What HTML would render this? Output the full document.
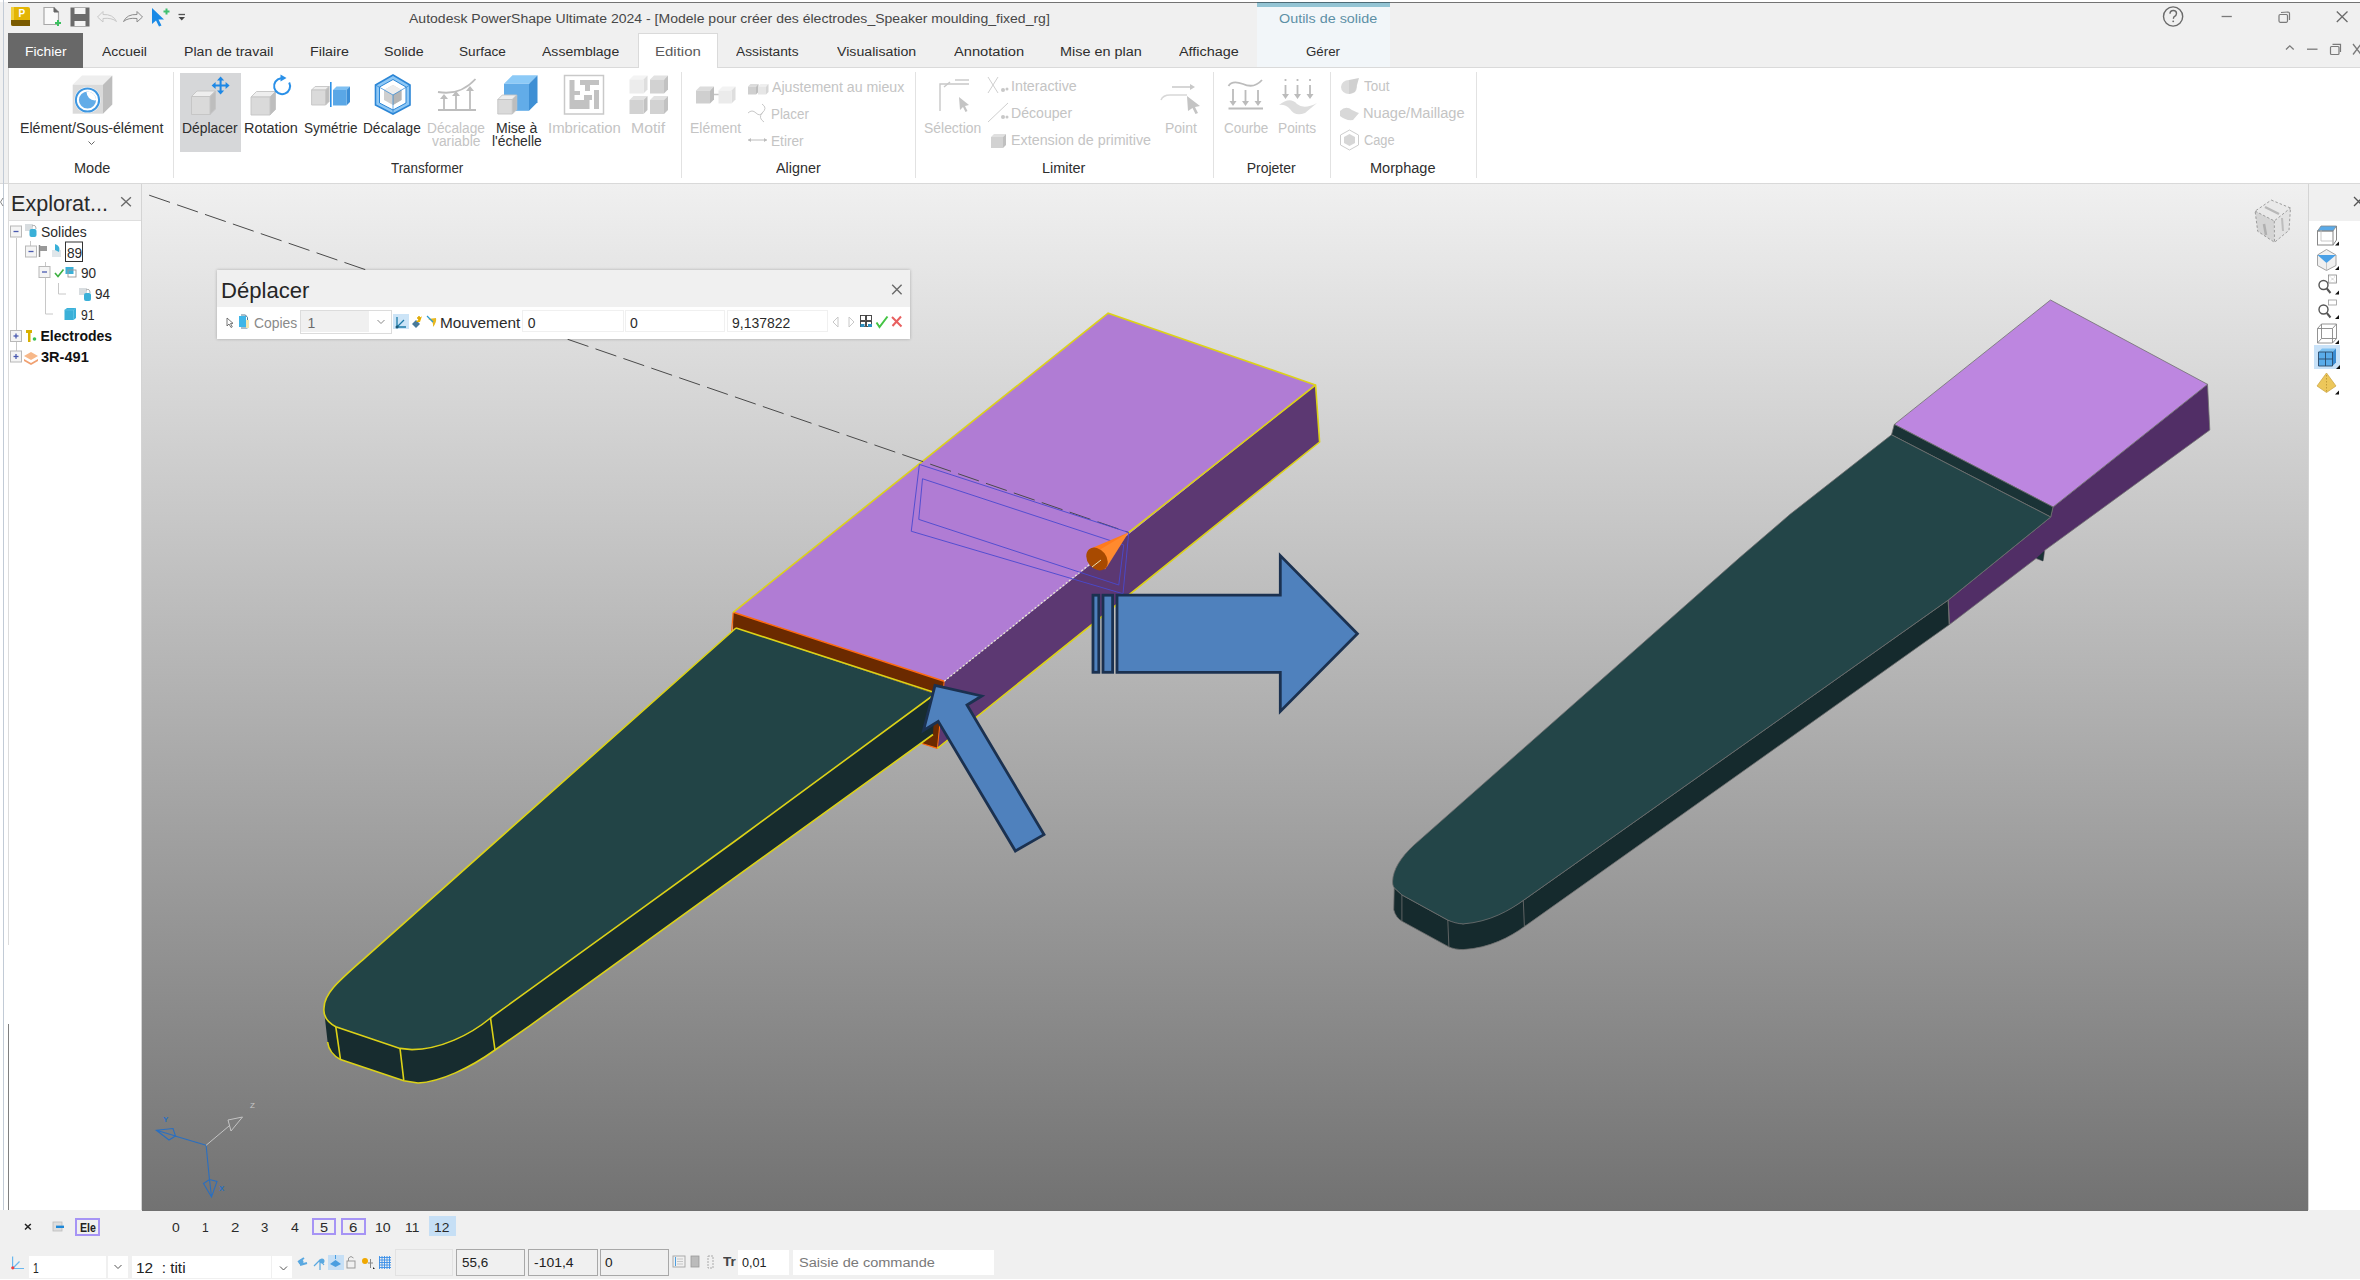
<!DOCTYPE html>
<html><head><meta charset="utf-8">
<style>
html,body{margin:0;padding:0;width:2360px;height:1280px;overflow:hidden;background:#f0f0f0;}
body{position:relative;font-family:"Liberation Sans",sans-serif;}
div{position:absolute;box-sizing:border-box;}
.t{position:absolute;white-space:pre;transform-origin:0 0;}
svg{position:absolute;left:0;top:0;}
</style></head><body>
<div style="left:0px;top:0px;width:2360px;height:2px;background:#ffffff"></div>
<div style="left:8px;top:2px;width:2352px;height:1px;background:#737373"></div>
<div style="left:0px;top:3px;width:2360px;height:30px;background:#f0f0f0"></div>
<div style="left:1257px;top:2px;width:133px;height:66px;background:#f2f6f9"></div>
<div style="left:1257px;top:2px;width:133px;height:1px;background:#4d6b76"></div>
<div style="left:1257px;top:3px;width:133px;height:4px;background:#93c4d4"></div>
<div style="left:8px;top:67px;width:2352px;height:1px;background:#dadada"></div>
<div style="left:8px;top:33px;width:75px;height:35px;background:#686868"></div>
<div style="left:638px;top:33px;width:80px;height:36px;background:#ffffff;border:1px solid #dadada;border-bottom:none"></div>
<div style="left:8px;top:68px;width:2352px;height:115px;background:#ffffff"></div>
<div style="left:8px;top:68px;width:1px;height:115px;background:#dadada"></div>
<div style="left:0px;top:183px;width:2360px;height:1px;background:#d9d9d9"></div>
<div style="left:173px;top:72px;width:1px;height:106px;background:#e2e2e2"></div>
<div style="left:681px;top:72px;width:1px;height:106px;background:#e2e2e2"></div>
<div style="left:915px;top:72px;width:1px;height:106px;background:#e2e2e2"></div>
<div style="left:1213px;top:72px;width:1px;height:106px;background:#e2e2e2"></div>
<div style="left:1330px;top:72px;width:1px;height:106px;background:#e2e2e2"></div>
<div style="left:1476px;top:72px;width:1px;height:106px;background:#e2e2e2"></div>
<div style="left:0px;top:184px;width:8px;height:1096px;background:#ffffff"></div>
<div style="left:3px;top:0px;width:1px;height:1280px;background:#c2cbd6"></div>
<div style="left:8px;top:184px;width:134px;height:37px;background:#f0f0f0"></div>
<div style="left:8px;top:221px;width:134px;height:989px;background:#ffffff"></div>
<div style="left:141px;top:184px;width:1px;height:1026px;background:#d4d4d4"></div>
<div style="left:8px;top:220px;width:133px;height:1px;background:#dedede"></div>
<div style="left:2309px;top:220px;width:51px;height:1px;background:#dedede"></div>
<div style="left:8px;top:184px;width:1px;height:761px;background:#dcdcdc"></div>
<div style="left:8px;top:1024px;width:1px;height:256px;background:#808080"></div>
<div style="left:4px;top:184px;width:4px;height:1096px;background:#ffffff"></div>
<div style="left:142px;top:184px;width:2166px;height:1027px;background:linear-gradient(to bottom,#f0f0f0 0%,#727272 100%)"></div>
<div style="left:2308px;top:184px;width:52px;height:37px;background:#f0f0f0"></div>
<div style="left:2308px;top:221px;width:52px;height:989px;background:#ffffff"></div>
<div style="left:2308px;top:184px;width:1px;height:1026px;background:#d4d4d4"></div>
<div style="left:0px;top:1210px;width:2360px;height:70px;background:#f0f0f0"></div>
<div style="left:142px;top:1210px;width:2166px;height:1px;background:#707070"></div>
<div style="left:0px;top:1279px;width:2360px;height:1px;background:#ffffff"></div>
<div style="left:180px;top:72.6px;width:61.4px;height:79.4px;background:#d6d7d9"></div>
<div style="left:75.3px;top:1217.5px;width:24.7px;height:18.5px;border:2px solid #a694f5;background:#f0f0f0"></div>
<div style="left:311.8px;top:1217.9px;width:24px;height:17.5px;border:2px solid #a694f5;background:#f0f0f0"></div>
<div style="left:341.2px;top:1217.9px;width:24.4px;height:17.5px;border:2px solid #a694f5;background:#f0f0f0"></div>
<div style="left:428.6px;top:1216px;width:27.2px;height:20px;background:#c6dff5"></div>
<div style="left:28.8px;top:1255.8px;width:77.2px;height:22px;background:#ffffff"></div>
<div style="left:107.8px;top:1255.8px;width:20.3px;height:22px;background:#ffffff"></div>
<div style="left:131.9px;top:1256px;width:139.5px;height:22px;background:#ffffff"></div>
<div style="left:272px;top:1256px;width:20.4px;height:22px;background:#ffffff"></div>
<div style="left:328px;top:1254.5px;width:15.5px;height:15.5px;background:#c6dff5"></div>
<div style="left:394.7px;top:1249px;width:58.3px;height:26.5px;background:#f0f0f0;border:1px solid #e2e2e2"></div>
<div style="left:456.3px;top:1248.6px;width:69px;height:27.5px;background:#f0f0f0;border:1px solid #a8a8a8"></div>
<div style="left:527.6px;top:1248.6px;width:70px;height:27.5px;background:#f0f0f0;border:1px solid #a8a8a8"></div>
<div style="left:600.3px;top:1248.6px;width:68.8px;height:27.5px;background:#f0f0f0;border:1px solid #a8a8a8"></div>
<div style="left:737.9px;top:1250px;width:51.3px;height:25px;background:#ffffff"></div>
<div style="left:792.7px;top:1250px;width:201.6px;height:25px;background:#ffffff"></div>
<div style="left:2314px;top:345px;width:26px;height:24px;background:#c9e2f8"></div>
<svg width="2360" height="1280" viewBox="0 0 2360 1280">
<clipPath id="vpclip"><rect x="142" y="184" width="2166" height="1026"/></clipPath>
<g clip-path="url(#vpclip)">
<path d="M1315.6,385 L1319.6,442 L937.4,748.4 L944.2,681.3 Z" fill="#5c3872"/>
<path d="M1108.1,313.2 L1315.6,385 L944.2,681.3 L733.2,612.3 Z" fill="#b07cd4"/>
<path d="M733.2,612.3 L944.2,681.3 L935,694 L736,628 L733,634 Z" fill="#6b2a00"/>
<path d="M933,692 L944.2,681.3 L937.4,748.4 L921.8,743.5 L933,734 Z" fill="#6b2a00"/>
<path d="M733.2,612.3 L944.2,681.3" stroke="#ff6a10" stroke-width="1.6" fill="none"/>
<path d="M733.2,612.3 L731.5,633" stroke="#ff6a10" stroke-width="1.2" fill="none"/>
<path d="M937.4,748.4 L921.8,743.5" stroke="#ff6a10" stroke-width="1.2" fill="none"/>
<path d="M937.4,748.4 L944.2,681.3" stroke="#ff6a10" stroke-width="1" fill="none"/>
<path d="M935,694 L933,734.5 L530,1025.6 L495,1050 C470,1068 440,1082 418,1083 L403.8,1080.7 L340.5,1059.6 C332,1055 328.5,1049 327.6,1042 L324,1010 C323,1016 327,1022 335.8,1026.8 L400,1048.4 L412,1049.6 C440,1049.5 470,1035 490.5,1018 L530,989.4 Z" fill="#172c2f"/>
<path d="M736,628 L935,694 L736.5,840 L640,909.8 L530,989.4 L490.5,1018 C470,1035 440,1049.5 412,1049.6 L400,1048.4 L335.8,1026.8 C327,1022 323,1016 324,1008 C324,993 340,980 365,957.8 Z" fill="#224446"/>
<g fill="none" stroke="#dcd218" stroke-width="1.6"><path d="M733.2,612.3 L1108.1,313.2 L1315.6,385 L1319.6,442 L937.4,748.4"/><path d="M1315.6,385 L1128.75,532.5"/><path d="M736,628 L365,957.8 C340,980 324,993 324,1008 C323,1016 327,1022 335.8,1026.8 L400,1048.4 L412,1049.6 C440,1049.5 470,1035 490.5,1018 L530,989.4 L640,909.8 L736.5,840 L935,694"/><path d="M736,628 L933,692"/><path d="M933,734.5 L530,1025.6 L495,1050 C470,1068 440,1082 418,1083 L403.8,1080.7 L340.5,1059.6 C332,1055 328.5,1049 327.6,1042"/><path d="M335.8,1026.8 L340.5,1059.6 M400,1048.4 L403.8,1080.7 M490.5,1018 L495,1050"/></g>
<line x1="149.2" y1="195.2" x2="1128.75" y2="532.5" stroke="#4a4a4a" stroke-width="1" stroke-dasharray="22 7.5"/>
<path d="M944.2,681.3 L1100,556" stroke="#e8e8d0" stroke-width="1.3" stroke-dasharray="2 2" fill="none"/>
<g fill="none" stroke="#4a4ad0" stroke-width="1" opacity="0.9"><path d="M919.4,464.4 L1128.75,532.5 L1123,593.75 L911.25,531.25 Z"/><path d="M922.5,478.75 L1123.75,545 L1118.75,585 L918.75,519.4 Z"/></g>
<path d="M1128.5,532.5 L1088.5,549.5 L1105,569.5 Z" fill="#ff7b1c"/>
<path d="M1128.5,532.5 L1096,552 L1107,567 Z" fill="#ff9a40" opacity="0.5"/>
<ellipse cx="1097" cy="559" rx="9.5" ry="12.5" transform="rotate(-38 1097 559)" fill="#a84a00"/>
<path d="M1092,567 L1101,560" stroke="#e8e0b0" stroke-width="1"/>
<path d="M2207.5,384.3 L2053,507 L2050.7,517 L1948.2,600.1 L1949.3,624.7 L2036,558.5 L2043,561 L2044.8,550.3 L2209.8,430 Z" fill="#512e66" stroke="#707070" stroke-width="0.8"/>
<path d="M2036.6,558 L2044.2,551 L2043,561 Z" fill="#1a3336"/>
<path d="M2050.5,300 L2207.5,384.3 L2053,507 L1894.3,424.4 Z" fill="#bd86e0" stroke="#707070" stroke-width="0.8"/>
<path d="M1894.3,424.4 L2053,507 L2050.7,517 L1891.5,434.8 Z" fill="#1a3336" stroke="#707070" stroke-width="0.8"/>
<path d="M1948.2,600.1 L1523.3,900.4 C1510,910 1490,919 1463.1,923.9 L1447.8,920.1 L1401.9,894.9 L1394.2,887.8 L1393.7,909.7 C1395,915 1398,919 1401.9,921.2 L1448.9,946.9 C1452,948.5 1458,949.6 1463.1,949.6 C1490,948 1510,937 1524.4,926.6 L1949.3,624.7 Z" fill="#152a2d" stroke="#707070" stroke-width="0.8"/>
<path d="M1891.5,434.8 L1790.3,514.1 L1740,557.3 L1414,845 C1400,858 1393,870 1392.6,881.2 C1392.5,884 1393,886 1394.2,887.8 L1401.9,894.9 L1447.8,920.1 C1452,922 1458,923.9 1463.1,923.9 C1490,922 1510,910 1523.3,900.4 L1948.2,600.1 L2050.7,517 Z" fill="#234548" stroke="#707070" stroke-width="0.8"/>
<path d="M1401.9,894.9 L1401.9,921.2 M1447.8,920.1 L1448.9,946.9 M1523.3,900.4 L1524.4,926.6 M1948.2,600.1 L1949.3,624.7" stroke="#707070" stroke-width="0.8" fill="none"/>
<path d="M935,685.3 L981.7,696 L967,705 L1044,834.6 L1015.4,851 L938.2,721.4 L923.5,730.4 Z" fill="#4f81bd" stroke="#1b3150" stroke-width="2.8" stroke-linejoin="miter"/>
<g fill="#4f81bd" stroke="#1b3150" stroke-width="2.8"><rect x="1093" y="595.2" width="5.8" height="77.1"/><rect x="1103" y="595.2" width="9.6" height="77.1"/><path d="M1117,595.2 L1280.3,595.2 L1280.3,555.6 L1357.4,633.8 L1280.3,711.4 L1280.3,672.3 L1117,672.3 Z"/></g>
</g>
</svg>
<div style="left:217px;top:270px;width:693px;height:69px;box-shadow:0 0 3px 0px rgba(0,0,0,0.25)"></div>
<div style="left:217px;top:270px;width:693px;height:37px;background:#f0f0f0"></div>
<div style="left:217px;top:307px;width:693px;height:32px;background:#ffffff"></div>
<div style="left:299.5px;top:309.6px;width:92.1px;height:24.1px;background:#fff;border:1px solid #dcdcdc"></div>
<div style="left:301px;top:311px;width:67.5px;height:21px;background:#f0f0f0"></div>
<div style="left:522px;top:310px;width:101.5px;height:22px;background:#fff;border:1px solid #f0f0f0"></div>
<div style="left:625px;top:310px;width:100px;height:22px;background:#fff;border:1px solid #f0f0f0"></div>
<div style="left:726.9px;top:310px;width:100.9px;height:22px;background:#fff;border:1px solid #f0f0f0"></div>
<div style="left:393px;top:314px;width:16px;height:15px;background:#cce4f7"></div>
<span class="t" style="left:408.50px;top:11.00px;font-size:13.7px;line-height:15.30px;color:#474747;transform:scaleX(1.0246);">Autodesk PowerShape Ultimate 2024 - [Modele pour créer des électrodes_Speaker moulding_fixed_rg]</span>
<span class="t" style="left:1279.00px;top:11.00px;font-size:13.7px;line-height:15.30px;color:#5d90a6;transform:scaleX(1.0487);">Outils de solide</span>
<span class="t" style="left:24.89px;top:44.20px;font-size:13.7px;line-height:15.30px;color:#ffffff;transform:scaleX(1.0121);">Fichier</span>
<span class="t" style="left:102.10px;top:44.20px;font-size:13.7px;line-height:15.30px;color:#2e2e2e;transform:scaleX(1.0185);">Accueil</span>
<span class="t" style="left:184.37px;top:44.20px;font-size:13.7px;line-height:15.30px;color:#2e2e2e;transform:scaleX(1.0304);">Plan de travail</span>
<span class="t" style="left:310.36px;top:44.20px;font-size:13.7px;line-height:15.30px;color:#2e2e2e;transform:scaleX(1.0434);">Filaire</span>
<span class="t" style="left:384.20px;top:44.20px;font-size:13.7px;line-height:15.30px;color:#2e2e2e;transform:scaleX(1.0418);">Solide</span>
<span class="t" style="left:458.60px;top:44.20px;font-size:13.7px;line-height:15.30px;color:#2e2e2e;transform:scaleX(0.9944);">Surface</span>
<span class="t" style="left:541.70px;top:44.20px;font-size:13.7px;line-height:15.30px;color:#2e2e2e;transform:scaleX(1.0253);">Assemblage</span>
<span class="t" style="left:736.30px;top:44.20px;font-size:13.7px;line-height:15.30px;color:#2e2e2e;transform:scaleX(1.0027);">Assistants</span>
<span class="t" style="left:836.70px;top:44.20px;font-size:13.7px;line-height:15.30px;color:#2e2e2e;transform:scaleX(1.0344);">Visualisation</span>
<span class="t" style="left:953.90px;top:44.20px;font-size:13.7px;line-height:15.30px;color:#2e2e2e;transform:scaleX(1.0719);">Annotation</span>
<span class="t" style="left:1060.25px;top:44.20px;font-size:13.7px;line-height:15.30px;color:#2e2e2e;transform:scaleX(1.0540);">Mise en plan</span>
<span class="t" style="left:1179.20px;top:44.20px;font-size:13.7px;line-height:15.30px;color:#2e2e2e;transform:scaleX(1.0532);">Affichage</span>
<span class="t" style="left:1306.00px;top:44.20px;font-size:13.7px;line-height:15.30px;color:#2e2e2e;transform:scaleX(0.9709);">Gérer</span>
<span class="t" style="left:654.50px;top:44.20px;font-size:13.7px;line-height:15.30px;color:#5a5a5a;transform:scaleX(1.0960);">Edition</span>
<span class="t" style="left:20.49px;top:121.23px;font-size:14px;line-height:15.64px;color:#2e2e2e;transform:scaleX(1.0125);">Elément/Sous-élément</span>
<span class="t" style="left:182.01px;top:121.23px;font-size:14px;line-height:15.64px;color:#2e2e2e;transform:scaleX(0.9934);">Déplacer</span>
<span class="t" style="left:243.97px;top:121.23px;font-size:14px;line-height:15.64px;color:#2e2e2e;transform:scaleX(1.0326);">Rotation</span>
<span class="t" style="left:303.90px;top:121.23px;font-size:14px;line-height:15.64px;color:#2e2e2e;transform:scaleX(0.9685);">Symétrie</span>
<span class="t" style="left:363.02px;top:121.23px;font-size:14px;line-height:15.64px;color:#2e2e2e;transform:scaleX(0.9766);">Décalage</span>
<span class="t" style="left:427.02px;top:121.23px;font-size:14px;line-height:15.64px;color:#c4c4c4;transform:scaleX(0.9800);">Décalage</span>
<span class="t" style="left:432.00px;top:134.33px;font-size:14px;line-height:15.64px;color:#c4c4c4;transform:scaleX(0.9870);">variable</span>
<span class="t" style="left:495.70px;top:121.23px;font-size:14px;line-height:15.64px;color:#2e2e2e;transform:scaleX(1.0038);">Mise à</span>
<span class="t" style="left:492.00px;top:134.33px;font-size:14px;line-height:15.64px;color:#2e2e2e;transform:scaleX(0.9908);">l'échelle</span>
<span class="t" style="left:547.64px;top:121.23px;font-size:14px;line-height:15.64px;color:#c4c4c4;transform:scaleX(1.0647);">Imbrication</span>
<span class="t" style="left:631.07px;top:121.23px;font-size:14px;line-height:15.64px;color:#c4c4c4;transform:scaleX(1.1274);">Motif</span>
<span class="t" style="left:689.70px;top:121.23px;font-size:14px;line-height:15.64px;color:#c4c4c4;transform:scaleX(0.9967);">Elément</span>
<span class="t" style="left:772.00px;top:80.13px;font-size:14px;line-height:15.64px;color:#c4c4c4;transform:scaleX(1.0120);">Ajustement au mieux</span>
<span class="t" style="left:771.05px;top:106.53px;font-size:14px;line-height:15.64px;color:#c4c4c4;transform:scaleX(0.9533);">Placer</span>
<span class="t" style="left:771.02px;top:134.03px;font-size:14px;line-height:15.64px;color:#c4c4c4;transform:scaleX(0.9760);">Etirer</span>
<span class="t" style="left:924.20px;top:121.13px;font-size:14px;line-height:15.64px;color:#c4c4c4;transform:scaleX(0.9946);">Sélection</span>
<span class="t" style="left:1010.78px;top:79.43px;font-size:14px;line-height:15.64px;color:#c4c4c4;transform:scaleX(1.0188);">Interactive</span>
<span class="t" style="left:1010.79px;top:106.13px;font-size:14px;line-height:15.64px;color:#c4c4c4;transform:scaleX(1.0060);">Découper</span>
<span class="t" style="left:1010.78px;top:133.13px;font-size:14px;line-height:15.64px;color:#c4c4c4;transform:scaleX(1.0223);">Extension de primitive</span>
<span class="t" style="left:1164.50px;top:121.13px;font-size:14px;line-height:15.64px;color:#c4c4c4;transform:scaleX(0.9961);">Point</span>
<span class="t" style="left:1223.60px;top:121.03px;font-size:14px;line-height:15.64px;color:#c4c4c4;transform:scaleX(0.9646);">Courbe</span>
<span class="t" style="left:1277.82px;top:121.03px;font-size:14px;line-height:15.64px;color:#c4c4c4;transform:scaleX(0.9813);">Points</span>
<span class="t" style="left:1364.20px;top:79.23px;font-size:14px;line-height:15.64px;color:#c4c4c4;transform:scaleX(0.9596);">Tout</span>
<span class="t" style="left:1363.16px;top:105.93px;font-size:14px;line-height:15.64px;color:#c4c4c4;transform:scaleX(1.0446);">Nuage/Maillage</span>
<span class="t" style="left:1364.20px;top:133.13px;font-size:14px;line-height:15.64px;color:#c4c4c4;transform:scaleX(0.9144);">Cage</span>
<span class="t" style="left:73.96px;top:160.63px;font-size:14px;line-height:15.64px;color:#2e2e2e;transform:scaleX(1.0370);">Mode</span>
<span class="t" style="left:391.40px;top:160.63px;font-size:14px;line-height:15.64px;color:#2e2e2e;transform:scaleX(0.9546);">Transformer</span>
<span class="t" style="left:776.00px;top:160.63px;font-size:14px;line-height:15.64px;color:#2e2e2e;transform:scaleX(1.0247);">Aligner</span>
<span class="t" style="left:1042.27px;top:160.63px;font-size:14px;line-height:15.64px;color:#2e2e2e;transform:scaleX(1.0328);">Limiter</span>
<span class="t" style="left:1246.70px;top:160.63px;font-size:14px;line-height:15.64px;color:#2e2e2e;">Projeter</span>
<span class="t" style="left:1369.66px;top:160.63px;font-size:14px;line-height:15.64px;color:#2e2e2e;transform:scaleX(1.0393);">Morphage</span>
<span class="t" style="left:11.34px;top:191.24px;font-size:22.5px;line-height:25.13px;color:#2a2a2a;transform:scaleX(0.9582);">Explorat...</span>
<span class="t" style="left:40.50px;top:224.93px;font-size:14px;line-height:15.64px;color:#2a2a2a;transform:scaleX(0.9953);">Solides</span>
<span class="t" style="left:66.60px;top:245.53px;font-size:14px;line-height:15.64px;color:#2a2a2a;transform:scaleX(0.9755);">89</span>
<span class="t" style="left:80.70px;top:266.13px;font-size:14px;line-height:15.64px;color:#2a2a2a;transform:scaleX(0.9692);">90</span>
<span class="t" style="left:94.80px;top:287.33px;font-size:14px;line-height:15.64px;color:#2a2a2a;transform:scaleX(0.9629);">94</span>
<span class="t" style="left:80.70px;top:307.93px;font-size:14px;line-height:15.64px;color:#2a2a2a;transform:scaleX(0.8742);">91</span>
<span class="t" style="left:40.50px;top:329.13px;font-size:14px;line-height:15.64px;color:#111111;font-weight:bold;">Electrodes</span>
<span class="t" style="left:40.50px;top:349.73px;font-size:14px;line-height:15.64px;color:#111111;font-weight:bold;transform:scaleX(1.0405);">3R-491</span>
<span class="t" style="left:220.70px;top:279.49px;font-size:22px;line-height:24.57px;color:#262626;transform:scaleX(1.0033);">Déplacer</span>
<span class="t" style="left:253.70px;top:315.73px;font-size:14px;line-height:15.64px;color:#8a8a8a;transform:scaleX(0.9936);">Copies</span>
<span class="t" style="left:307.60px;top:315.73px;font-size:14px;line-height:15.64px;color:#6a6a6a;">1</span>
<span class="t" style="left:439.60px;top:315.73px;font-size:14px;line-height:15.64px;color:#2b2b2b;transform:scaleX(1.0975);">Mouvement</span>
<span class="t" style="left:527.70px;top:315.73px;font-size:14px;line-height:15.64px;color:#2b2b2b;">0</span>
<span class="t" style="left:630.00px;top:315.73px;font-size:14px;line-height:15.64px;color:#2b2b2b;">0</span>
<span class="t" style="left:732.10px;top:315.73px;font-size:14px;line-height:15.64px;color:#2b2b2b;transform:scaleX(0.9965);">9,137822</span>
<span class="t" style="left:79.70px;top:1220.40px;font-size:13.7px;line-height:15.30px;color:#222222;font-weight:bold;transform:scaleX(0.7739);">Ele</span>
<span class="t" style="left:172.40px;top:1220.65px;font-size:13.2px;line-height:14.74px;color:#2a2a2a;transform:scaleX(1.0571);">0</span>
<span class="t" style="left:202.08px;top:1220.65px;font-size:13.2px;line-height:14.74px;color:#2a2a2a;transform:scaleX(0.9167);">1</span>
<span class="t" style="left:231.00px;top:1220.65px;font-size:13.2px;line-height:14.74px;color:#2a2a2a;transform:scaleX(1.1429);">2</span>
<span class="t" style="left:261.00px;top:1220.65px;font-size:13.2px;line-height:14.74px;color:#2a2a2a;">3</span>
<span class="t" style="left:290.50px;top:1220.65px;font-size:13.2px;line-height:14.74px;color:#2a2a2a;transform:scaleX(1.0714);">4</span>
<span class="t" style="left:375.33px;top:1220.65px;font-size:13.2px;line-height:14.74px;color:#2a2a2a;transform:scaleX(1.0724);">10</span>
<span class="t" style="left:404.56px;top:1220.65px;font-size:13.2px;line-height:14.74px;color:#2a2a2a;transform:scaleX(1.0441);">11</span>
<span class="t" style="left:319.80px;top:1220.65px;font-size:13.2px;line-height:14.74px;color:#2a2a2a;transform:scaleX(1.1000);">5</span>
<span class="t" style="left:349.00px;top:1220.65px;font-size:13.2px;line-height:14.74px;color:#2a2a2a;transform:scaleX(1.1429);">6</span>
<span class="t" style="left:434.45px;top:1220.65px;font-size:13.2px;line-height:14.74px;color:#2a2a2a;transform:scaleX(1.0499);">12</span>
<span class="t" style="left:33.17px;top:1260.65px;font-size:14.2px;line-height:15.86px;color:#222222;transform:scaleX(0.7286);">1</span>
<span class="t" style="left:135.82px;top:1260.65px;font-size:14.2px;line-height:15.86px;color:#222222;transform:scaleX(1.0834);">12  : titi</span>
<span class="t" style="left:462.00px;top:1255.20px;font-size:13.7px;line-height:15.30px;color:#222222;transform:scaleX(0.9805);">55,6</span>
<span class="t" style="left:533.50px;top:1255.20px;font-size:13.7px;line-height:15.30px;color:#222222;transform:scaleX(1.0205);">-101,4</span>
<span class="t" style="left:605.00px;top:1255.20px;font-size:13.7px;line-height:15.30px;color:#222222;">0</span>
<span class="t" style="left:723.00px;top:1256.49px;font-size:12.5px;line-height:13.96px;color:#444444;font-weight:bold;transform:scaleX(1.0882);">Tr</span>
<span class="t" style="left:742.00px;top:1255.20px;font-size:13.7px;line-height:15.30px;color:#222222;transform:scaleX(0.9221);">0,01</span>
<span class="t" style="left:798.50px;top:1255.20px;font-size:13.7px;line-height:15.30px;color:#7a7a7a;transform:scaleX(1.0628);">Saisie de commande</span>
<svg width="2360" height="1280" viewBox="0 0 2360 1280" style="position:absolute;left:0;top:0"><rect x="11" y="7" width="19" height="19" rx="2" fill="#e3b505"/><path d="M11,20 L30,20 L30,26 L13,26 Q11,26 11,24 Z" fill="#7a5a00"/><path d="M11,7 L14,7 L14,20 L11,20 Z" fill="#f0cf40"/><text x="18.5" y="17" font-family="Liberation Sans" font-weight="bold" font-size="10" fill="#fff">P</text><path d="M44,7.5 L54,7.5 L58.5,12 L58.5,24.5 L44,24.5 Z" fill="#fafafa" stroke="#a8a8a8" stroke-width="1.2"/><path d="M54,7.5 L54,12 L58.5,12" fill="#666" stroke="#666" stroke-width="1"/><path d="M58,20 L58,26 M55,23 L61,23" stroke="#3cc060" stroke-width="2"/><rect x="70.5" y="7.5" width="19" height="19" fill="#6a6a6a"/><rect x="74.5" y="8" width="11" height="6" fill="#f4f4f4"/><rect x="74.5" y="21" width="11" height="5" fill="#f4f4f4"/><path d="M97.5,17 L103,11.5 L103,14.5 Q113,14 116.5,21.5 Q112,17.5 103,18.5 L103,22 Z" fill="none" stroke="#c8c8c8" stroke-width="1"/><path d="M142.5,17 L137,11.5 L137,14.5 Q127,14 123.5,21.5 Q128,17.5 137,18.5 L137,22 Z" fill="none" stroke="#8c8c8c" stroke-width="1"/><path d="M152,8 L164,19.5 L158.5,19.5 L161.5,25.5 L159,26.5 L156,20.5 L152,24 Z" fill="#1a8ae6"/><path d="M166.5,8.5 L166.5,14.5 M163.5,11.5 L169.5,11.5" stroke="#40c070" stroke-width="2"/><path d="M178.5,14.5 L185,14.5" stroke="#555" stroke-width="1.3"/><path d="M178.5,17 L185,17 L181.75,20.5 Z" fill="#444"/><circle cx="2173.1" cy="16.5" r="9.6" fill="none" stroke="#6a6a6a" stroke-width="1.4"/><path d="M2170,13.8 Q2170,10.5 2173.3,10.5 Q2176.5,10.5 2176.5,13.5 Q2176.5,15.5 2174,16.8 L2173.3,18.8" fill="none" stroke="#6a6a6a" stroke-width="1.4"/><circle cx="2173.2" cy="21.3" r="0.9" fill="#6a6a6a"/><path d="M2221.6,16.5 L2231.8,16.5" stroke="#7a7a7a" stroke-width="1.3"/><rect x="2279" y="14.5" width="8.5" height="7.8" rx="1.2" fill="none" stroke="#7a7a7a" stroke-width="1.2"/><path d="M2281,12.5 L2288,12 Q2289.5,12 2289.5,13.5 L2289.5,20" fill="none" stroke="#7a7a7a" stroke-width="1.2"/><path d="M2336.8,11.5 L2347.5,22 M2347.5,11.5 L2336.8,22" stroke="#6a6a6a" stroke-width="1.3"/><path d="M2286,49.5 L2289.8,45.8 L2293.7,49.5" fill="none" stroke="#7a7a7a" stroke-width="1.3"/><path d="M2307,49.2 L2317.5,49.2" stroke="#7a7a7a" stroke-width="1.3"/><rect x="2330.5" y="46.5" width="8.5" height="8" rx="1" fill="none" stroke="#7a7a7a" stroke-width="1.2"/><path d="M2332.5,44.3 L2340.5,44.3 L2340.5,52" fill="none" stroke="#7a7a7a" stroke-width="1.2"/><path d="M2353,44 L2361,54.5 M2361,44 L2353,54.5" stroke="#7a7a7a" stroke-width="1.3"/><g><path d="M72.7,84.7 L82.0,75.4 L112.3,75.4 L103.0,84.7 Z" fill="#eeeeee"/><path d="M103.0,84.7 L112.3,75.4 L112.3,104.4 L103.0,113.7 Z" fill="#bdbdbd"/><rect x="72.7" y="84.7" width="30.3" height="29" fill="#dadada"/></g><circle cx="87.5" cy="100" r="13" fill="#fff"/><circle cx="87.5" cy="100" r="11.6" fill="none" stroke="#3d96e0" stroke-width="2"/><circle cx="87.5" cy="100" r="8.6" fill="#62ace8"/><clipPath id="mcl"><circle cx="87.5" cy="100" r="8.6"/></clipPath><circle cx="94.8" cy="92.2" r="8.2" fill="#fff" clip-path="url(#mcl)"/><path d="M88.5,141.5 L91.5,144.5 L94.5,141.5" fill="none" stroke="#666" stroke-width="1"/><path d="M191.5,96.5 L197.0,91 L215.5,91 L210.0,96.5 Z" fill="#eeeeee" stroke="#c4c4c4" stroke-width="0.9" stroke-linejoin="round"/><path d="M210.0,96.5 L215.5,91 L215.5,109 L210.0,114.5 Z" fill="#bdbdbd" stroke="#c4c4c4" stroke-width="0.9" stroke-linejoin="round"/><rect x="191.5" y="96.5" width="18.5" height="18" fill="#dadada" stroke="#c4c4c4" stroke-width="0.9" stroke-linejoin="round"/><g fill="#1e88e5"><path d="M220.6,76.5 L224.2,80.5 L217,80.5 Z M220.6,94.5 L224.2,90.5 L217,90.5 Z M211.6,85.5 L215.6,81.9 L215.6,89.1 Z M229.6,85.5 L225.6,81.9 L225.6,89.1 Z"/></g><path d="M220.6,80 L220.6,91 M215,85.5 L226,85.5" stroke="#1e88e5" stroke-width="2"/><path d="M251,97.0 L256.5,91.5 L275.5,91.5 L270,97.0 Z" fill="#eeeeee" stroke="#c4c4c4" stroke-width="0.9" stroke-linejoin="round"/><path d="M270,97.0 L275.5,91.5 L275.5,109.5 L270,115.0 Z" fill="#bdbdbd" stroke="#c4c4c4" stroke-width="0.9" stroke-linejoin="round"/><rect x="251" y="97.0" width="19" height="18" fill="#dadada" stroke="#c4c4c4" stroke-width="0.9" stroke-linejoin="round"/><path d="M281,78.2 A8,8 0 1 0 289.2,82.5" fill="none" stroke="#2a90e8" stroke-width="2"/><path d="M280.5,74.5 L286.5,78 L280.5,81.5 Z" fill="#2a90e8"/><path d="M311.6,90.0 L315.1,86.5 L329.1,86.5 L325.6,90.0 Z" fill="#eeeeee" stroke="#c4c4c4" stroke-width="0.9" stroke-linejoin="round"/><path d="M325.6,90.0 L329.1,86.5 L329.1,101.5 L325.6,105.0 Z" fill="#bdbdbd" stroke="#c4c4c4" stroke-width="0.9" stroke-linejoin="round"/><rect x="311.6" y="90.0" width="14" height="15" fill="#dadada" stroke="#c4c4c4" stroke-width="0.9" stroke-linejoin="round"/><path d="M330.8,82 L330.8,107" stroke="#2a90e8" stroke-width="1.6"/><path d="M333,90.0 L336.5,86.5 L350.0,86.5 L346.5,90.0 Z" fill="#7fc0f2"/><path d="M346.5,90.0 L350.0,86.5 L350.0,102.0 L346.5,105.5 Z" fill="#3c8ed6"/><rect x="333" y="90.0" width="13.5" height="15.5" fill="#5aa7e6"/><path d="M393,75 L410,85 L410,105 L393,114 L375.5,105 L375.5,85 Z" fill="#8fc8f5" stroke="#2c86d6" stroke-width="1.6"/><path d="M393,79.5 L406,87 L406,103 L393,110 L379.5,103 L379.5,87 Z" fill="#fff" stroke="#2c86d6" stroke-width="1"/><path d="M393,85 L401.5,90 L401.5,100 L393,105 L384,100 L384,90 Z" fill="#cfcfcf"/><path d="M393,85 L401.5,90 L393,95 L384,90 Z" fill="#ededed"/><path d="M393,95 L401.5,90 L401.5,100 L393,105 Z" fill="#b5b5b5"/><path d="M393,95 L393,114 M393,95 L410,85 M393,95 L375.5,85" stroke="#2c86d6" stroke-width="1" opacity="0.7"/><g stroke="#bdbdbd" fill="none" stroke-width="1.8"><path d="M438,92 Q460,96 475.5,79"/><path d="M438,110 L476,110"/><path d="M444,110 L444,98 M456,110 L456,95 M470,110 L470,90"/></g><g fill="#bdbdbd"><path d="M440,99 L444,94 L448,99 Z M452,96 L456,91 L460,96 Z M466,91 L470,86 L474,91 Z"/></g><path d="M504,83.8 L512.5,75.3 L537.5,75.3 L529,83.8 Z" fill="#8ccaf7"/><path d="M529,83.8 L537.5,75.3 L537.5,102.3 L529,110.8 Z" fill="#3e8fd4"/><rect x="504" y="83.8" width="25" height="27" fill="#62ace8"/><path d="M497.8,99.5 L502.3,95 L516.8,95 L512.3,99.5 Z" fill="#eeeeee" stroke="#c4c4c4" stroke-width="0.9" stroke-linejoin="round"/><path d="M512.3,99.5 L516.8,95 L516.8,109.5 L512.3,114.0 Z" fill="#bdbdbd" stroke="#c4c4c4" stroke-width="0.9" stroke-linejoin="round"/><rect x="497.8" y="99.5" width="14.5" height="14.5" fill="#dadada" stroke="#c4c4c4" stroke-width="0.9" stroke-linejoin="round"/><rect x="564.5" y="75.5" width="39" height="38.5" fill="#fff" stroke="#c9c9c9" stroke-width="1.5"/><g fill="#c2c2c2"><rect x="569.5" y="80" width="5" height="20"/><rect x="569.5" y="100" width="20" height="9"/><rect x="580" y="80" width="19" height="5"/><rect x="585" y="85" width="5" height="6"/><rect x="594" y="90" width="5" height="19"/><rect x="574" y="91" width="6" height="4"/><rect x="584" y="95" width="8" height="5"/></g><path d="M629.5,79.5 L633.5,75.5 L647.5,75.5 L643.5,79.5 Z" fill="#f4f4f4"/><path d="M643.5,79.5 L647.5,75.5 L647.5,89.5 L643.5,93.5 Z" fill="#dedede"/><rect x="629.5" y="79.5" width="14" height="14" fill="#ececec"/><path d="M650,79.5 L654,75.5 L668,75.5 L664,79.5 Z" fill="#e2e2e2"/><path d="M664,79.5 L668,75.5 L668,89.5 L664,93.5 Z" fill="#c2c2c2"/><rect x="650" y="79.5" width="14" height="14" fill="#d2d2d2"/><path d="M629.5,100 L633.5,96 L647.5,96 L643.5,100 Z" fill="#e2e2e2"/><path d="M643.5,100 L647.5,96 L647.5,110 L643.5,114 Z" fill="#c2c2c2"/><rect x="629.5" y="100" width="14" height="14" fill="#d2d2d2"/><path d="M650,100 L654,96 L668,96 L664,100 Z" fill="#e2e2e2"/><path d="M664,100 L668,96 L668,110 L664,114 Z" fill="#c2c2c2"/><rect x="650" y="100" width="14" height="14" fill="#d2d2d2"/><path d="M696,90.5 L700,86.5 L714,86.5 L710,90.5 Z" fill="#dcdcdc"/><path d="M710,90.5 L714,86.5 L714,99.5 L710,103.5 Z" fill="#bdbdbd"/><rect x="696" y="90.5" width="14" height="13" fill="#cfcfcf"/><path d="M714,94.5 L719,94.5" stroke="#c6c6c6" stroke-width="1.5"/><path d="M718.5,90.5 L722.5,86.5 L735.5,86.5 L731.5,90.5 Z" fill="#f3f3f3"/><path d="M731.5,90.5 L735.5,86.5 L735.5,99.5 L731.5,103.5 Z" fill="#dedede"/><rect x="718.5" y="90.5" width="13" height="13" fill="#ebebeb"/><path d="M748,86.5 L750.5,84 L758.5,84 L756,86.5 Z" fill="#dcdcdc"/><path d="M756,86.5 L758.5,84 L758.5,92 L756,94.5 Z" fill="#bdbdbd"/><rect x="748" y="86.5" width="8" height="8" fill="#cfcfcf"/><path d="M758,86.5 L760.5,84 L768.5,84 L766,86.5 Z" fill="#efefef"/><path d="M766,86.5 L768.5,84 L768.5,92 L766,94.5 Z" fill="#d6d6d6"/><rect x="758" y="86.5" width="8" height="8" fill="#e6e6e6"/><path d="M748,113 Q752,109 756,113 Q760,117 763,112 M762,104 Q768,108 762,113 Q758,118 764,122" fill="none" stroke="#c8c8c8" stroke-width="1"/><path d="M748,140 L767,140" stroke="#bcbcbc" stroke-width="1"/><path d="M748,140 L751,138 L751,142 Z M767,140 L764,138 L764,142 Z" fill="#bcbcbc"/><g stroke="#c8c8c8" fill="none" stroke-width="1.4"><path d="M940,111 L940,84 L969,84"/><path d="M944,87 L950,82"/><path d="M955,80 L969,80"/></g><path d="M959,97 L969,105 L965,106 L967.5,111 L965.5,112 L963,107 L960,110 Z" fill="#c4c4c4"/><g stroke="#cfcfcf" fill="none" stroke-width="1"><path d="M988,77 L998,93 M998,77 L988,93"/><path d="M988,122 L1008,103"/></g><g fill="#c8c8c8"><circle cx="1003" cy="90" r="2"/><circle cx="1007" cy="89" r="1.5"/><circle cx="1003" cy="117" r="2"/><circle cx="1007" cy="117" r="1.5"/></g><path d="M991,137 L994,134 L1006,134 L1003,137 Z" fill="#e0e0e0"/><path d="M1003,137 L1006,134 L1006,145 L1003,148 Z" fill="#c0c0c0"/><rect x="991" y="137" width="12" height="11" fill="#d2d2d2"/><path d="M1172,87 L1190,87" stroke="#c8c8c8" stroke-width="1.5"/><path d="M1190,84 L1195,87 L1190,90 Z" fill="#c8c8c8"/><path d="M1161,100 Q1163,95 1170,95 L1187,95" fill="none" stroke="#d8d8d8" stroke-width="1.5"/><path d="M1187,96 L1200,106 L1195,107 L1198,113 L1195.5,114 L1192.5,108 L1188,111 Z" fill="#c4c4c4"/><g stroke="#bcbcbc" fill="none" stroke-width="1.8"><path d="M1228.5,86 Q1232,80 1243,84 Q1254,89 1262,80"/><path d="M1228.5,108.5 L1263,108.5"/><path d="M1233,89 L1233,103 M1245.5,90 L1245.5,103 M1258,90 L1258,103"/></g><g fill="#bcbcbc"><path d="M1229.5,101 L1233,106 L1236.5,101 Z M1242,101 L1245.5,106 L1249,101 Z M1254.5,101 L1258,106 L1261.5,101 Z"/></g><path d="M1279,105 Q1290,96 1297,104 Q1304,110 1317,103 L1305,113 Q1295,117 1290,109 Q1285,104 1279,105 Z" fill="#dddddd"/><g stroke="#bcbcbc" stroke-width="1.8"><path d="M1285.5,79 L1285.5,81 M1297.5,79 L1297.5,81 M1310,79 L1310,81"/><path d="M1285.5,85 L1285.5,96 M1297.5,85 L1297.5,96 M1310,85 L1310,96"/></g><g fill="#bcbcbc"><path d="M1282,94 L1285.5,99 L1289,94 Z M1294,94 L1297.5,99 L1301,94 Z M1306.5,94 L1310,99 L1313.5,94 Z"/></g><ellipse cx="1349" cy="87" rx="8" ry="7" fill="#dcdcdc"/><path d="M1349,80 L1359,78 L1355,92 L1349,94 Z" fill="#d0d0d0"/><path d="M1340,111 Q1346,105 1352,110 Q1358,113 1359,113 L1353,120 Q1346,121 1340,116 Z" fill="#d8d8d8"/><path d="M1349.5,130 L1358.5,135 L1358.5,145 L1349.5,150 L1340.5,145 L1340.5,135 Z" fill="none" stroke="#cdcdcd" stroke-width="1"/><path d="M1349.5,134 L1355,137 L1355,143 L1349.5,146 L1344,143 L1344,137 Z" fill="#d6d6d6"/><path d="M892.2,284.8 L901.6,294.2 M901.6,284.8 L892.2,294.2" stroke="#6a6a6a" stroke-width="1.4"/><path d="M227,318 L227,326 L229,324 L231,327.5 L232.3,326.8 L230.5,323.5 L233,323.3 Z" fill="none" stroke="#555" stroke-width="0.8"/><rect x="239" y="316" width="7" height="11" fill="#3fb6e8"/><path d="M241,315 L245.5,315 L247.5,317.5 L247.5,328 L241,328" fill="none" stroke="#2a5a7a" stroke-width="0.8"/><rect x="246" y="320" width="3" height="8" fill="#f5e7b0"/><path d="M388,319.5 L381,319.5" stroke="none"/><path d="M377.5,320 L381,323.5 L384.5,320" fill="none" stroke="#888" stroke-width="1"/><path d="M397,317 L397,327 L406,327 M397,327 L404,320" fill="none" stroke="#1d7aa8" stroke-width="1.3"/><circle cx="397" cy="327" r="1.5" fill="#1d5a78"/><path d="M412,324 L416,320 L420,324 L416,328 Z" fill="#4a7a9a"/><path d="M416,322 L422,316 L420,322 Z" fill="#f0b400"/><path d="M417,318 L421,318 M419,316 L419,320" stroke="#e0a800" stroke-width="1.5"/><path d="M428,319 Q434,321 433,327 Q437,322 436,318 Z" fill="#e8b820"/><path d="M427,316 L433,322" stroke="#2a9ad0" stroke-width="1.2"/><path d="M838,317 L833,322 L838,327 Z" fill="none" stroke="#c8c8c8" stroke-width="1"/><path d="M849,317 L854,322 L849,327 Z" fill="none" stroke="#c8c8c8" stroke-width="1"/><g fill="none" stroke="#3a3a3a" stroke-width="0.9"><rect x="860.5" y="315.5" width="5" height="5"/><rect x="866.5" y="315.5" width="5" height="5"/><rect x="860.5" y="321.5" width="5" height="5"/><rect x="866.5" y="321.5" width="5" height="5"/></g><rect x="860.5" y="324" width="4" height="3" fill="#2a8fc0"/><rect x="868" y="324" width="4" height="3" fill="#2a8fc0"/><path d="M876.5,322.5 L879.5,327 L887.5,316.5" fill="none" stroke="#44c444" stroke-width="2"/><path d="M892,317 L901.5,326.5 M901,316.5 L892.5,326" stroke="#e86060" stroke-width="2"/><path d="M121.2,197.3 L130.9,206.2 M130.9,197.3 L121.2,206.2" stroke="#6a6a6a" stroke-width="1.4"/><path d="M3,198 L0.5,202 L3,206" fill="none" stroke="#888" stroke-width="1"/><g stroke="#c8c8c8" stroke-width="1" fill="none"><path d="M16.5,238 L16.5,352"/><path d="M30.5,241 L30.5,246"/><path d="M45.5,262 L45.5,268 M45.5,278 L45.5,314 L53,314"/><path d="M58.5,283 L58.5,294 L66,294"/></g><rect x="10.5" y="226" width="11" height="11" fill="#f4f4f4" stroke="#b8b8b8" stroke-width="1"/><path d="M13.5,231.5 L18.5,231.5" stroke="#4a5ab0" stroke-width="1.3"/><rect x="25.5" y="246" width="11" height="11" fill="#f4f4f4" stroke="#b8b8b8" stroke-width="1"/><path d="M28.5,251.5 L33.5,251.5" stroke="#4a5ab0" stroke-width="1.3"/><rect x="39" y="266.5" width="11" height="11" fill="#f4f4f4" stroke="#b8b8b8" stroke-width="1"/><path d="M42,272.0 L47,272.0" stroke="#4a5ab0" stroke-width="1.3"/><rect x="10.5" y="330.5" width="11" height="11" fill="#f4f4f4" stroke="#b8b8b8" stroke-width="1"/><path d="M13.5,336.0 L18.5,336.0" stroke="#4a5ab0" stroke-width="1.3"/><path d="M16.0,333.5 L16.0,338.5" stroke="#4a5ab0" stroke-width="1.3"/><rect x="10.5" y="351" width="11" height="11" fill="#f4f4f4" stroke="#b8b8b8" stroke-width="1"/><path d="M13.5,356.5 L18.5,356.5" stroke="#4a5ab0" stroke-width="1.3"/><path d="M16.0,354 L16.0,359" stroke="#4a5ab0" stroke-width="1.3"/><rect x="25" y="224" width="8" height="7" fill="#d8dde0"/><path d="M32,226 Q36,224 36,229" fill="none" stroke="#999" stroke-width="0.8"/><rect x="29.5" y="229" width="7" height="8" rx="2" fill="#3ab0d8"/><path d="M39.5,245 L39.5,257" stroke="#888" stroke-width="1.5"/><rect x="40" y="246" width="7" height="5" fill="#999"/><path d="M52,250 L61,250 L61,257 L52,257 Z" fill="#dfe6ea"/><path d="M55,244 Q61,246 59,252 L55,250 Z" fill="#3ab0d8"/><rect x="65.5" y="242" width="17" height="19.5" fill="none" stroke="#333" stroke-width="1"/><path d="M55,273 L58,276.5 L63.5,269.5" fill="none" stroke="#3cb040" stroke-width="1.6"/><rect x="65.5" y="267" width="8" height="7" fill="#3ab0d8"/><rect x="68" y="270" width="8" height="7" fill="none" stroke="#999" stroke-width="0.9"/><rect x="79" y="288" width="8" height="7" fill="#d8dde0"/><path d="M86,290 Q90,288 90,293" fill="none" stroke="#999" stroke-width="0.8"/><rect x="84" y="293" width="7" height="8" rx="2" fill="#3ab0d8"/><path d="M64.5,310 L67,308 L76,308 L76,318 L73.5,320 L64.5,320 Z" fill="#3ab0d8"/><path d="M64.5,310 L73.5,310 L76,308 M73.5,310 L73.5,320" fill="none" stroke="#6ccbec" stroke-width="0.6"/><path d="M26,330 L32,330 L32,333 L30.5,333 L30.5,342 L28,342 L28,333 L26,333 Z" fill="#d8b000"/><circle cx="34.5" cy="339" r="1.8" fill="#3cc050"/><path d="M24,356 L31,352 L38,356 L31,360 Z" fill="#f7b889"/><path d="M24,359 L31,363 L38,359 L38,361 L31,365 L24,361 Z" fill="#f0a070"/><path d="M25,1224 L30.8,1229.5 M30.8,1224 L25,1229.5" stroke="#222" stroke-width="1.5"/><rect x="53" y="1222" width="9" height="9" fill="#ddd" stroke="#bbb" stroke-width="0.8"/><path d="M56,1226.8 L64,1226.8" stroke="#1e88d8" stroke-width="2.4"/><path d="M12.6,1268.5 L12.6,1256.5 M12.6,1268.5 L24,1268.5 M12.6,1268.5 L19.5,1261.5" stroke="#6ab7ee" stroke-width="1.2" fill="none"/><circle cx="12.8" cy="1267.8" r="1.6" fill="#f04040"/><path d="M114.5,1265 L118,1268.5 L121.5,1265" fill="none" stroke="#555" stroke-width="1"/><path d="M280,1266.5 L283.5,1270 L287,1266.5" fill="none" stroke="#555" stroke-width="1"/><path d="M298,1262 L304,1258 M300,1265 L307,1263" stroke="#5aa8e0" stroke-width="2"/><circle cx="301" cy="1262" r="2.5" fill="#5aa8e0"/><path d="M314,1266 L320,1260 L324,1265 M320,1260 L320,1270" stroke="#5aa8e0" stroke-width="1.2" fill="none"/><circle cx="322" cy="1261" r="2.5" fill="#5aa8e0"/><path d="M330,1264 L335.5,1260 L341,1264 L335.5,1267 Z" fill="#4a9ee0"/><path d="M335.5,1259 L335.5,1255" stroke="#4a9ee0" stroke-width="1"/><rect x="347" y="1261" width="8" height="7" fill="none" stroke="#999" stroke-width="1"/><path d="M348.5,1261 L348.5,1258 Q351,1255 353.5,1258" fill="none" stroke="#999" stroke-width="1"/><circle cx="365" cy="1261" r="3" fill="#f0a800"/><path d="M368,1263 L373,1263 M370.5,1259 L370.5,1268" stroke="#888" stroke-width="1"/><path d="M373,1267 L375,1269 L373,1269 Z" fill="#222"/><g stroke="#3a8ee8" stroke-width="0.9"><path d="M379.5,1256 L379.5,1269 M382,1256 L382,1269 M384.5,1256 L384.5,1269 M387,1256 L387,1269 M389.5,1256 L389.5,1269 M379,1257.5 L391,1257.5 M379,1260 L391,1260 M379,1262.5 L391,1262.5 M379,1265 L391,1265 M379,1267.5 L391,1267.5"/></g><rect x="673" y="1256" width="12" height="11" fill="none" stroke="#aaa" stroke-width="1"/><path d="M675.5,1257 L675.5,1266" stroke="#4a9ee0" stroke-width="1"/><path d="M677,1259 L683,1259 M677,1261.5 L683,1261.5 M677,1264 L683,1264" stroke="#bbb" stroke-width="0.8"/><rect x="691" y="1256" width="8" height="11" fill="#bbb" stroke="#999" stroke-width="0.8"/><rect x="708" y="1256" width="5" height="12" fill="none" stroke="#aaa" stroke-width="1" stroke-dasharray="2 1"/><path d="M2354,197 L2363,206 M2363,197 L2354,206" fill="none" stroke="#555" stroke-width="1.3"/><path d="M2317.5,231 L2321,226 L2336.5,226 L2333,231 Z" fill="#5aaae8" stroke="#888" stroke-width="0.8"/><rect x="2317.5" y="231" width="15.5" height="14" fill="none" stroke="#888" stroke-width="1"/><path d="M2336.5,226 L2336.5,240 L2333,245" fill="none" stroke="#888" stroke-width="1"/><path d="M2321,230 L2321,241 L2333,241" fill="none" stroke="#bbb" stroke-width="0.8"/><path d="M2339,245.5 L2339,241.5 L2335,245.5 Z" fill="#111"/><path d="M2326.5,249.5 L2336,255 L2336,265.5 L2326.5,270.5 L2317.5,265.5 L2317.5,255 Z" fill="#f0f0f0" stroke="#999" stroke-width="0.9"/><path d="M2317.5,255 L2336,255 L2326.5,263 Z" fill="#4aa0e6"/><path d="M2326.5,263 L2326.5,270.5" stroke="#bbb" stroke-width="0.8"/><path d="M2339,270 L2339,266 L2335,270 Z" fill="#111"/><circle cx="2323.5" cy="285" r="4.5" fill="none" stroke="#555" stroke-width="1.4"/><path d="M2326.8,288.5 L2330.5,293" stroke="#555" stroke-width="2"/><rect x="2328.5" y="275" width="8" height="8" fill="#fff" stroke="#888" stroke-width="0.8"/><path d="M2330,276.5 L2335,281.5 M2335,276.5 L2330,281.5" stroke="#aaa" stroke-width="0.8" stroke-dasharray="1 1"/><path d="M2339,294.5 L2339,290.5 L2335,294.5 Z" fill="#111"/><circle cx="2323.5" cy="309.5" r="4.5" fill="none" stroke="#555" stroke-width="1.4"/><path d="M2326.8,313 L2330.5,317.5" stroke="#555" stroke-width="2"/><rect x="2328.5" y="300" width="8" height="5" fill="#fff" stroke="#999" stroke-width="0.8"/><path d="M2339,319 L2339,315 L2335,319 Z" fill="#111"/><path d="M2317.5,328.5 L2321.5,324 L2336.5,324 L2332.5,328.5 Z M2317.5,328.5 L2317.5,343 L2332.5,343 L2332.5,328.5 M2336.5,324 L2336.5,338.5 L2332.5,343 M2321.5,324 L2321.5,338.5 L2336.5,338.5 M2321.5,338.5 L2317.5,343" fill="none" stroke="#888" stroke-width="0.9"/><path d="M2339,344 L2339,340 L2335,344 Z" fill="#111"/><path d="M2318.5,352 L2322,348.5 L2336,348.5 L2332.5,352 Z" fill="#7cc0f0"/><rect x="2318.5" y="352" width="14" height="14" fill="#5aacea"/><path d="M2332.5,352 L2336,348.5 L2336,362.5 L2332.5,366 Z" fill="#3a8ad0"/><path d="M2318.5,352 L2332.5,352 L2332.5,366 L2318.5,366 Z M2325.5,352 L2325.5,366 M2318.5,359 L2332.5,359" fill="none" stroke="#2a4a6a" stroke-width="0.9"/><path d="M2340,369 L2340,365 L2336,369 Z" fill="#111"/><path d="M2326.5,373 L2336,386 L2326.5,392.5 L2317,386 Z" fill="#ecc75a" stroke="#c8a040" stroke-width="0.7"/><path d="M2326.5,375 L2326.5,392" stroke="#b89030" stroke-width="0.8" stroke-dasharray="1.5 1.5"/><path d="M2339,394.5 L2339,390.5 L2335,394.5 Z" fill="#111"/><g><path d="M2271.3,200.1 L2290.5,208 L2274.3,220.9 L2255.1,211.1 Z" fill="#e9e9e9"/><path d="M2255.1,211.1 L2274.3,220.9 L2274.5,242.3 L2257.7,231.3 Z" fill="#d4d4d4"/><path d="M2274.3,220.9 L2290.5,208 L2289,230.3 L2274.5,242.3 Z" fill="#e2e2e2"/><g fill="none" stroke="#8a8a8a" stroke-width="1" stroke-dasharray="2.5 2" opacity="0.8"><path d="M2271.3,200.1 L2290.5,208 L2289,230.3 L2274.5,242.3 L2257.7,231.3 L2255.1,211.1 Z M2255.1,211.1 L2274.3,220.9 L2290.5,208 M2274.3,220.9 L2274.5,242.3"/></g><path d="M2265,207 L2279,214" stroke="#999" stroke-width="2.5" opacity="0.6"/><path d="M2264,224 L2266,235" stroke="#999" stroke-width="2.5" opacity="0.6"/><path d="M2282,218 L2283,231" stroke="#999" stroke-width="2" opacity="0.5"/></g><g stroke="#2a6fc0" fill="none" stroke-width="1.1"><path d="M206.1,1145.3 L175,1136 M206.1,1145.3 L209.4,1179"/><path d="M156.4,1130.3 L173,1128.5 L175.5,1136 L169,1140 Z M156.4,1130.3 L175.5,1136"/><path d="M211.5,1197 L203.5,1183.5 L209.5,1179.5 L217,1181.5 Z M211.5,1197 L209.5,1179.5"/></g><g stroke="#c4c4c4" fill="none" stroke-width="1"><path d="M206.1,1145.3 L229,1126"/><path d="M242.5,1117 L228,1120 L231,1131 Z"/></g><text x="163" y="1122" font-family="Liberation Sans" font-weight="bold" font-size="8" fill="#2a6fc0">Y</text><text x="219" y="1191" font-family="Liberation Sans" font-weight="bold" font-size="8" fill="#2a6fc0">X</text><text x="250" y="1108" font-family="Liberation Sans" font-size="8" fill="#c8c8c8">Z</text></svg>
</body></html>
